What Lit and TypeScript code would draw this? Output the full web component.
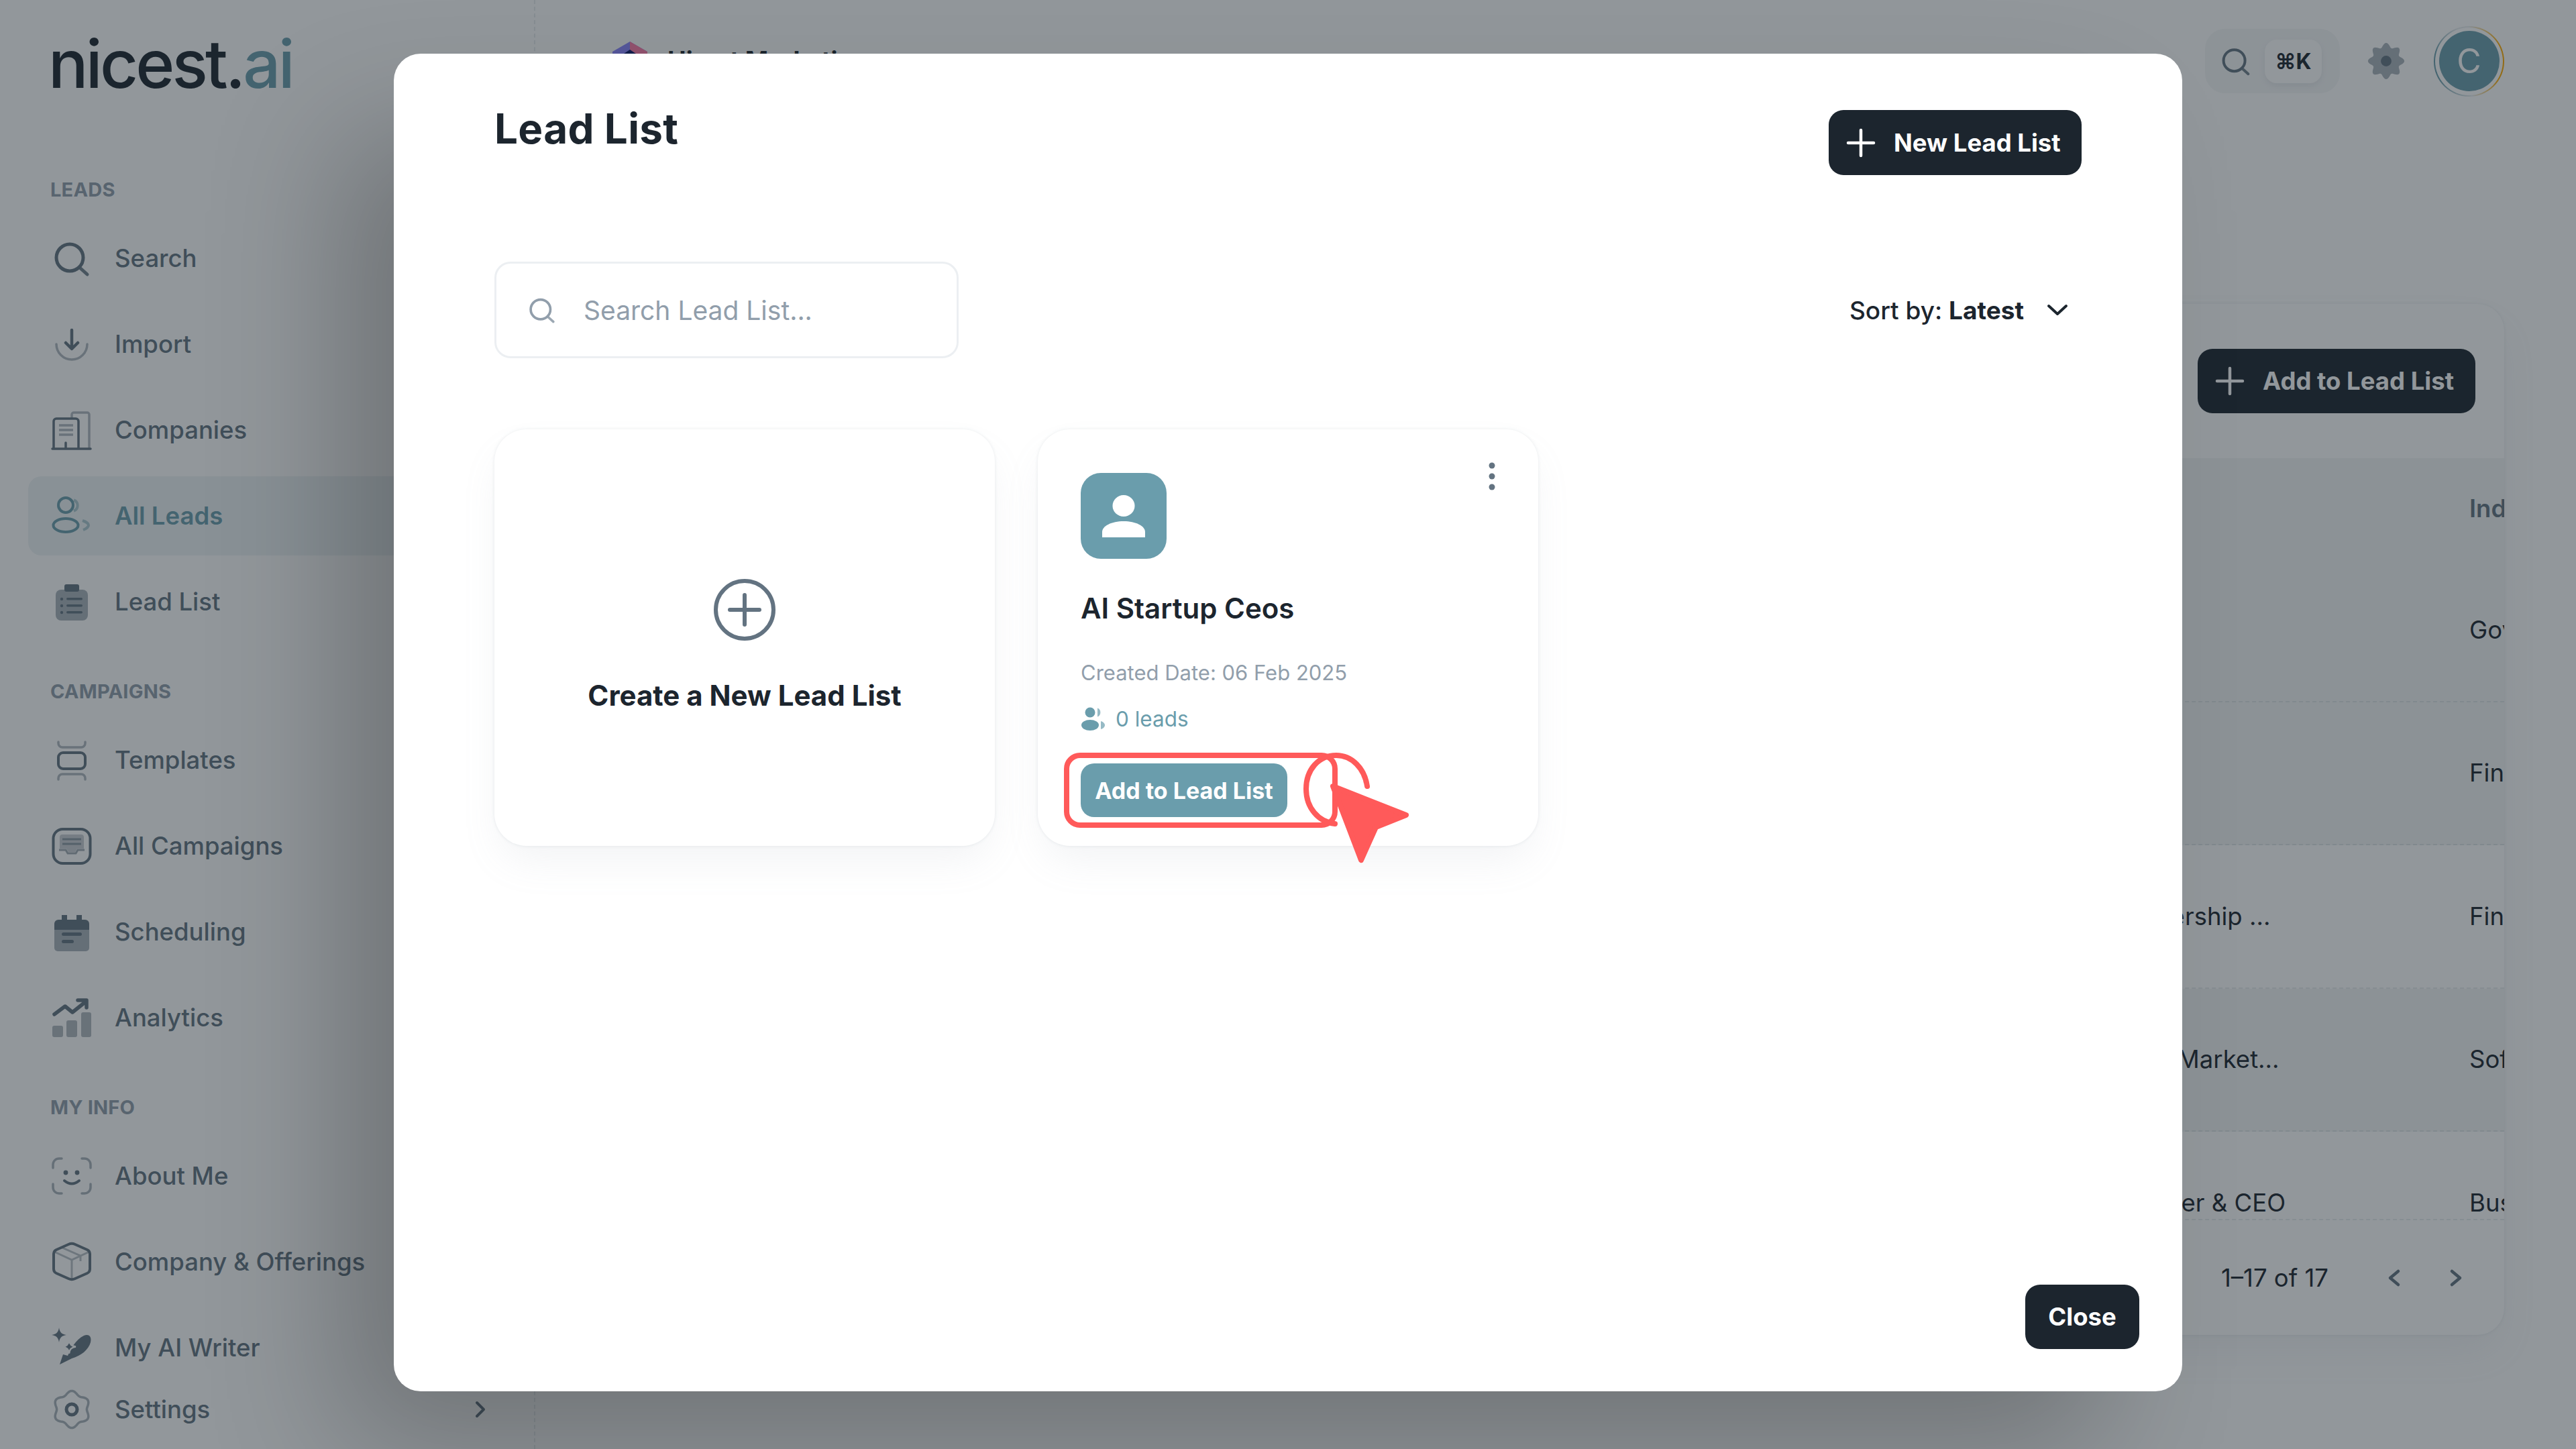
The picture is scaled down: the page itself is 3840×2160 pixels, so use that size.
import { LitElement, html, css, svg } from "lit";
import { customElement } from "lit/decorators.js";

function gearPath(c: number, R: number, a: number, n: number) {
  let d = "";
  for (let i = 0; i < 120; i++) {
    const t = (i / 120) * Math.PI * 2;
    const r = R + a * Math.cos(n * t);
    d += `${i ? "L" : "M"}${(c + r * Math.cos(t)).toFixed(2)} ${(c + r * Math.sin(t)).toFixed(2)}`;
  }
  return d + "Z";
}

const icons: Record<string, any> = {
  search: svg`<circle cx="27" cy="29" r="20" fill="none" stroke="currentColor" stroke-width="5"/><path d="M43 45l10 9" fill="none" stroke="currentColor" stroke-width="5" stroke-linecap="round" opacity=".9"/>`,
  import: svg`<path d="M7 30a23 23 0 0 0 46 0" fill="none" stroke="currentColor" stroke-width="3.5" stroke-linecap="round" opacity=".5"/><path d="M30 9v27M21 28l9 9 9-9" fill="none" stroke="currentColor" stroke-width="4.5" stroke-linecap="round" stroke-linejoin="round"/>`,
  companies: svg`<path d="M30 12V7a3 3 0 0 1 3-3h20a3 3 0 0 1 3 3v50" fill="none" stroke="currentColor" stroke-width="3.5" opacity=".5"/><path d="M3 57V17a4 4 0 0 1 4-4h29a4 4 0 0 1 4 4v40M1 58h57M21 58v-9" fill="none" stroke="currentColor" stroke-width="3.5" stroke-linecap="round"/><path d="M11 23h21M11 30h21M11 37h21" fill="none" stroke="currentColor" stroke-width="3.5" opacity=".5"/>`,
  leads: svg`<circle cx="21" cy="14" r="11" fill="none" stroke="currentColor" stroke-width="4"/><path d="M33 6.5a8.5 8.5 0 0 1 0 16" fill="none" stroke="currentColor" stroke-width="4" opacity=".5"/><ellipse cx="21" cy="44" rx="18.5" ry="10" fill="none" stroke="currentColor" stroke-width="4"/><path d="M46 37c6 2 9 5 9 7s-3 5-8 7" fill="none" stroke="currentColor" stroke-width="4" opacity=".5"/>`,
  list: svg`<rect x="6" y="12" width="48" height="46" rx="8" fill="currentColor" opacity=".55"/><rect x="19" y="4" width="22" height="11" rx="3" fill="currentColor"/><g fill="currentColor"><circle cx="15" cy="26" r="2.2"/><circle cx="15" cy="36" r="2.2"/><circle cx="15" cy="46" r="2.2"/><rect x="22" y="24" width="24" height="3.6" rx="1.8"/><rect x="22" y="34" width="24" height="3.6" rx="1.8"/><rect x="22" y="44" width="24" height="3.6" rx="1.8"/></g>`,
  templates: svg`<rect x="10" y="19" width="40" height="24" rx="7" fill="none" stroke="currentColor" stroke-width="4"/><path d="M10 3v2a6 6 0 0 0 6 6h28a6 6 0 0 0 6-6V3M10 59v-2a6 6 0 0 1 6-6h28a6 6 0 0 1 6 6v2" fill="none" stroke="currentColor" stroke-width="3.5" stroke-linecap="round" opacity=".5"/>`,
  campaigns: svg`<rect x="2.5" y="5" width="55" height="51" rx="14" fill="none" stroke="currentColor" stroke-width="4"/><path d="M12 17a4 4 0 0 1 4-4h28a4 4 0 0 1 4 4v17h-10l-3 5H25l-3-5H12z" fill="currentColor" opacity=".35"/><path d="M16 20h28M16 27h28" stroke="currentColor" stroke-width="3" opacity=".6"/><path d="M11 36h10l3 5h12l3-5h10" fill="none" stroke="currentColor" stroke-width="3" opacity=".6"/>`,
  scheduling: svg`<path d="M4 54V27h52v27a5 5 0 0 1-5 5H9a5 5 0 0 1-5-5z" fill="currentColor" opacity=".55"/><path d="M4 27v-9a6 6 0 0 1 6-6h5V5h8v7h14V5h8v7h5a6 6 0 0 1 6 6v9z" fill="currentColor"/><rect x="15" y="31" width="30" height="5" rx="2.5" fill="currentColor"/><rect x="15" y="42" width="18" height="5" rx="2.5" fill="currentColor"/>`,
  analytics: svg`<g fill="currentColor" opacity=".5"><rect x="1" y="42" width="16" height="17" rx="3"/><rect x="22" y="34" width="16" height="25" rx="3"/><rect x="44" y="22" width="15" height="37" rx="3"/></g><path d="M4 25l16-12 11 9 20-16M39 4h13v11" fill="none" stroke="currentColor" stroke-width="5.5" stroke-linecap="round" stroke-linejoin="round"/>`,
  about: svg`<path d="M15 4H11a9 9 0 0 0-9 9v5M45 4h4a9 9 0 0 1 9 9v5M15 56H11a9 9 0 0 1-9-9v-5M45 56h4a9 9 0 0 0 9-9v-5" fill="none" stroke="currentColor" stroke-width="3.5" stroke-linecap="round" opacity=".55"/><circle cx="21" cy="25" r="3.4" fill="currentColor"/><circle cx="38" cy="25" r="3.4" fill="currentColor"/><path d="M19 37q11 9 22 0" fill="none" stroke="currentColor" stroke-width="4" stroke-linecap="round"/>`,
  offerings: svg`<path d="M25 4a12 12 0 0 1 10 0l18 8a7 7 0 0 1 4 6v23a7 7 0 0 1-4 6l-18 8a12 12 0 0 1-10 0L7 47a7 7 0 0 1-4-6V18a7 7 0 0 1 4-6z" fill="none" stroke="currentColor" stroke-width="4" stroke-linejoin="round"/><path d="M4 15l26 12 26-12M30 27v28M16 9l27 12v8" fill="none" stroke="currentColor" stroke-width="3" opacity=".45"/>`,
  writer: svg`<path d="M11 0c1 7 4 10 11 11-7 1-10 4-11 11-1-7-4-10-11-11 7-1 10-4 11-11z" fill="currentColor"/><path d="M12 55L17 40L24 42C28 32 36 18 48 12C56 9 60 14 58 22C55 33 44 42 30 46Z" fill="currentColor"/><path d="M26 19c.8 6 3.500 8.700 10 9.500-6.500.8-9.200 3.500-10 10-.8-6.500-3.500-9.200-10-10 6.500-.8 9.200-3.500 10-9.500z" fill="currentColor" stroke="#fff" stroke-width="2.500"/>`,
  settings: svg`<path d="${gearPath(30, 25, 2.6, 6)}" fill="none" stroke="currentColor" stroke-width="3.500" opacity=".55" transform="rotate(30 30 30)"/><circle cx="30" cy="30" r="8" fill="none" stroke="currentColor" stroke-width="5"/>`,
};

const groups = [
  { label: "LEADS", items: [["search", "Search"], ["import", "Import"], ["companies", "Companies"], ["leads", "All Leads"], ["list", "Lead List"]] },
  { label: "CAMPAIGNS", items: [["templates", "Templates"], ["campaigns", "All Campaigns"], ["scheduling", "Scheduling"], ["analytics", "Analytics"]] },
  { label: "MY INFO", items: [["about", "About Me"], ["offerings", "Company & Offerings"], ["writer", "My AI Writer"]] },
];

const rows = [
  ["", "Government", "tint"],
  ["", "Finance", "tint"],
  ["Partnership ...", "Finance", ""],
  ["Head Market...", "Software", "tint"],
  ["Founder & CEO", "Business", ""],
];

@customElement("app-root")
export class AppRoot extends LitElement {
  static styles = css`
    :host { display: block; position: relative; width: 3840px; height: 2160px; overflow: hidden; background: #fff; font-family: Inter, "Liberation Sans", sans-serif; color: #1c252e; }
    * { box-sizing: border-box; }
    .page { display: flex; height: 2160px; }
    .sidebar { width: 798px; flex: none; border-right: 2px dashed rgba(145,158,171,.2); padding: 0 42px; display: flex; flex-direction: column; }
    .logo { height: 224px; padding: 29px 0 0 30px; font-size: 99px; line-height: 132px; font-weight: 500; letter-spacing: -3.800px; white-space: nowrap; }
    .logo span { color: #6a9dac; }
    .group { display: flex; flex-direction: column; gap: 10px; margin-top: 41px; }
    .group + .group { margin-top: 57px; }
    .label { height: 36px; line-height: 36px; margin: 0 0 15px 33px; font-size: 29px; font-weight: 700; color: #919eab; letter-spacing: .2px; }
    .item { height: 118px; display: flex; align-items: center; gap: 34px; padding-left: 35px; border-radius: 20px; font-size: 36.500px; font-weight: 500; color: #637381; white-space: nowrap; }
    .item.active { background: rgba(106,157,172,.12); color: #6a9dac; font-weight: 600; }
    .item svg { width: 60px; height: 60px; flex: none; overflow: visible; }
    .item.settings { height: 66px; position: relative; }
    .item.settings .chev { margin-left: auto; margin-right: 23px; width: 30px; height: 30px; }

    .main { flex: 1; display: flex; flex-direction: column; padding-right: 107px; min-width: 0; }
    .top { height: 182px; flex: none; display: flex; align-items: center; justify-content: space-between; padding-left: 115px; }
    .org { display: flex; align-items: flex-start; gap: 30px; font-size: 37px; font-weight: 700; height: 182px; padding-top: 62px; line-height: 56px; }
    .org svg { width: 52px; height: 52px; flex: none; }
    .actions { display: flex; align-items: center; }
    .kbar { width: 201px; height: 96px; border-radius: 30px; background: rgba(145,158,171,.08); display: flex; align-items: center; padding-left: 22px; gap: 19px; }
    .kbar svg { width: 48px; height: 48px; color: #637381; }
    .kbd { width: 85px; height: 65px; border-radius: 18px; background: #fff; box-shadow: 0 4px 8px rgba(145,158,171,.16); display: grid; place-items: center; font: 700 32px Inter, "DejaVu Sans", sans-serif; }
    .gear { width: 56px; height: 56px; margin-left: 41px; color: #637381; }
    .ring { width: 105px; height: 105px; margin-left: 43px; border-radius: 50%; display: grid; place-items: center; background: conic-gradient(#e8ecee 0deg, #ffab00 60deg, #ffab00 120deg, #e8ecee 175deg, #6a9dac 240deg, #6a9dac 285deg, #e8ecee 340deg); }
    .ring-in { width: 101px; height: 101px; border-radius: 50%; background: #fff; display: grid; place-items: center; }
    .avatar { width: 90px; height: 90px; border-radius: 50%; background: #6a9dac; color: #fff; display: grid; place-items: center; font-size: 50px; font-weight: 400; }

    .panel { height: 1537px; margin: 271px 0 0 60px; border-radius: 40px; background: #fff; box-shadow: 0 0 5px rgba(145,158,171,.2), 0 30px 60px -10px rgba(145,158,171,.12); overflow: hidden; display: flex; flex-direction: column; flex: none; }
    .toolbar { height: 230px; display: flex; justify-content: flex-end; align-items: flex-start; padding: 67px 43px 0 0; flex: none; }
    .btn { border: 0; display: inline-flex; align-items: center; justify-content: center; background: #1c252e; color: #fff; border-radius: 22px; font: 700 36.500px Inter, sans-serif; white-space: nowrap; }
    .btn svg { width: 44px; height: 44px; flex: none; }
    .btn.addtop { width: 414px; height: 96px; gap: 27px; justify-content: flex-start; padding-left: 26px; }
    .rows { height: 1134px; overflow: hidden; flex: none; }
    .thead, .row { display: flex; justify-content: flex-end; align-items: center; font-size: 36.500px; white-space: nowrap; }
    .thead { height: 150px; color: #637381; font-weight: 600; background: rgba(80,130,130,.07); }
    .row { height: 213.500px; border-bottom: 2px dashed rgba(145,158,171,.2); }
    .row.tint { background: rgba(80,130,130,.07); }
    .c1 { width: 537px; flex: none; }
    .c2 { width: 52px; flex: none; overflow: hidden; }
    .foot { flex: 1; display: flex; align-items: center; justify-content: flex-end; padding: 0 54px 0 0; font-size: 36.500px; border-top: 2px dashed rgba(145,158,171,.2); }
    .foot .pg { margin-right: 80px; }
    .foot svg { width: 36px; height: 36px; color: #637381; }
    .foot svg + svg { margin-left: 56px; }

    .scrim { position: absolute; inset: 0; background: rgba(28,37,46,.48); }
    .modal { position: absolute; left: 587px; top: 80px; width: 2666px; height: 1994px; border-radius: 40px; background: #fff; box-shadow: -100px 100px 200px -20px rgba(0,0,0,.24); display: flex; flex-direction: column; }
    .body { flex: 1; padding: 84px 150px 0; }
    .mhead { display: flex; justify-content: space-between; align-items: flex-start; height: 226px; }
    h1 { margin: 0; font-size: 62px; font-weight: 700; line-height: 56px; letter-spacing: .3px; }
    .btn.new { width: 377px; height: 97px; gap: 27px; justify-content: flex-start; padding-left: 26px; }
    .tools { display: flex; justify-content: space-between; align-items: center; height: 144px; }
    .input { width: 692px; height: 144px; border: 3px solid #eceff2; border-radius: 24px; display: flex; align-items: center; padding-left: 46px; gap: 40px; color: #919eab; font-size: 39px; }
    .input svg { width: 44px; height: 44px; flex: none; }
    .sort { display: flex; align-items: center; gap: 34px; padding-right: 20px; font-size: 37px; font-weight: 500; }
    .sort b { font-weight: 700; }
    .sort svg { width: 32px; height: 32px; }
    .cards { display: flex; gap: 63px; margin-top: 106px; }
    .card { position: relative; width: 746px; height: 621px; border-radius: 48px; background: #fff; box-shadow: 0 0 5px rgba(145,158,171,.2), 0 30px 60px -10px rgba(145,158,171,.12); }
    .create { display: flex; flex-direction: column; align-items: center; padding-top: 221px; font-size: 42px; font-weight: 700; }
    .create svg { width: 96px; height: 96px; }
    .create div { margin-top: 50px; line-height: 60px; }
    .lead { padding: 65px 0 0 64px; display: flex; flex-direction: column; align-items: flex-start; margin-left: 1px; }
    .tile { width: 128px; height: 128px; border-radius: 30px; background: #6a9dac; display: grid; place-items: center; }
    .tile svg { width: 128px; height: 128px; }
    .lead h2 { margin: 46px 0 0; font-size: 42px; line-height: 56px; font-weight: 600; }
    .date { margin-top: 46px; font-size: 31px; line-height: 44px; color: #919eab; }
    .count { margin-top: 25px; display: flex; align-items: center; gap: 16px; font-size: 31.500px; line-height: 44px; color: #6a9dac; }
    .count svg { width: 36px; height: 36px; }
    .btn.add { margin-top: 44px; width: 308px; height: 80px; border-radius: 20px; background: #6a9dac; font-size: 34px; }
    .kebab { position: absolute; top: 46px; left: 663px; width: 28px; height: 48px; }
    .mark { position: absolute; left: 0; top: 0; width: 3840px; height: 2160px; pointer-events: none; }
    .mfoot { display: flex; justify-content: flex-end; padding: 0 64px 63px; }
    .btn.close { width: 170px; height: 96px; }
  `;

  render() {
    const plus = html`<svg viewBox="0 0 44 44"><path d="M22 3v38M3 22h38" stroke="currentColor" stroke-width="4.500" stroke-linecap="round" fill="none"/></svg>`;
    return html`
      <div class="page">
        <aside class="sidebar">
          <div class="logo">nicest.<span>ai</span></div>
          ${groups.map(
            (g) => html`<div class="group">
              <div class="label">${g.label}</div>
              ${g.items.map(
                ([ic, t]) => html`<div class="item ${t === "All Leads" ? "active" : ""}"><svg viewBox="0 0 60 60">${icons[ic]}</svg><span>${t}</span></div>`
              )}
            </div>`
          )}
          <div class="item settings"><svg viewBox="0 0 60 60">${icons.settings}</svg><span>Settings</span>
            <svg class="chev" viewBox="0 0 30 30"><path d="M10 5l10 10-10 10" fill="none" stroke="currentColor" stroke-width="4" stroke-linecap="round" stroke-linejoin="round"/></svg>
          </div>
        </aside>
        <main class="main">
          <header class="top">
            <div class="org">
              <svg viewBox="0 0 52 52"><path d="M26 0L52 15v37H0V15z" fill="#8a85ff"/><path d="M26 0L52 15v37H26z" fill="#ff7ba9"/><path d="M26 12L44 24v28H8V24z" fill="#0c1a6a"/></svg>
              <span>Hiemt Marketing</span>
            </div>
            <div class="actions">
              <div class="kbar">
                <svg viewBox="0 0 60 60">${icons.search}</svg>
                <div class="kbd">⌘K</div>
              </div>
              <svg class="gear" viewBox="0 0 60 60"><path d="${gearPath(30, 25.5, 3.5, 8)}" fill="currentColor" opacity=".55"/><circle cx="30" cy="30" r="8.500" fill="currentColor"/></svg>
              <div class="ring"><div class="ring-in"><div class="avatar">C</div></div></div>
            </div>
          </header>
          <section class="panel">
            <div class="toolbar"><button class="btn addtop">${plus}<span>Add to Lead List</span></button></div>
            <div class="rows">
              <div class="thead"><div class="c1"></div><div class="c2">Industry</div></div>
              ${rows.map(
                (r) => html`<div class="row ${r[2]}"><div class="c1">${r[0]}</div><div class="c2">${r[1]}</div></div>`
              )}
            </div>
            <div class="foot">
              <span class="pg">1–17 of 17</span>
              <svg viewBox="0 0 36 36"><path d="M24 8L12 18l12 10" fill="none" stroke="currentColor" stroke-width="4.500" stroke-linecap="round" stroke-linejoin="round"/></svg>
              <svg viewBox="0 0 36 36"><path d="M12 8l12 10-12 10" fill="none" stroke="currentColor" stroke-width="4.500" stroke-linecap="round" stroke-linejoin="round"/></svg>
            </div>
          </section>
        </main>
      </div>
      <div class="scrim"></div>
      <div class="modal">
        <div class="body">
          <div class="mhead">
            <h1>Lead List</h1>
            <button class="btn new">${plus}<span>New Lead List</span></button>
          </div>
          <div class="tools">
            <div class="input"><svg viewBox="0 0 60 60">${icons.search}</svg><span>Search Lead List...</span></div>
            <div class="sort"><span>Sort by: <b>Latest</b></span><svg viewBox="0 0 32 32"><path d="M3 10l13 12 13-12" fill="none" stroke="currentColor" stroke-width="4" stroke-linecap="round" stroke-linejoin="round"/></svg></div>
          </div>
          <div class="cards">
            <div class="card create">
              <svg viewBox="0 0 96 96"><circle cx="48" cy="48" r="43" fill="none" stroke="#637381" stroke-width="6"/><path d="M48 26v44M26 48h44" stroke="#637381" stroke-width="6" stroke-linecap="round"/></svg>
              <div>Create a New Lead List</div>
            </div>
            <div class="card lead">
              <div class="tile"><svg viewBox="0 0 128 128"><ellipse cx="64" cy="49" rx="16.500" ry="16" fill="#fff"/><path d="M32 96v-8c0-9 14-16 32-16s32 7 32 16v8z" fill="#fff"/></svg></div>
              <h2>AI Startup Ceos</h2>
              <div class="date">Created Date: 06 Feb 2025</div>
              <div class="count"><svg viewBox="0 0 36 36"><g fill="#6a9dac"><circle cx="14" cy="8" r="7.500"/><path d="M25 1.500a7 7 0 0 1 0 13z" opacity=".7"/><ellipse cx="14" cy="27" rx="13" ry="8"/><path d="M30 21c4 1 6 4 6 6s-2 5-6 6z" opacity=".7"/></g></svg><span>0 leads</span></div>
              <button class="btn add">Add to Lead List</button>
              <svg class="kebab" viewBox="0 0 28 48"><g fill="#637381"><circle cx="14" cy="8" r="4.500"/><circle cx="14" cy="24" r="4.500"/><circle cx="14" cy="40" r="4.500"/></g></svg>
            </div>
          </div>
        </div>
        <div class="mfoot"><button class="btn close">Close</button></div>
      </div>
      <svg class="mark" viewBox="0 0 3840 2160">
        <rect x="1590" y="1126" width="400" height="104" rx="20" fill="none" stroke="#ff5a5a" stroke-width="8"/>
        <path d="M2038 1172C2034 1145 2015 1126 1992 1126C1965 1126 1947 1148 1947 1176C1947 1204 1965 1225 1990 1228" fill="none" stroke="#ff5a5a" stroke-width="8" stroke-linecap="round"/>
        <path d="M1987 1172L2096 1215L2051 1233L2029 1282Z" fill="#ff5a5a" stroke="#ff5a5a" stroke-width="8" stroke-linejoin="round"/>
      </svg>
    `;
  }
}
